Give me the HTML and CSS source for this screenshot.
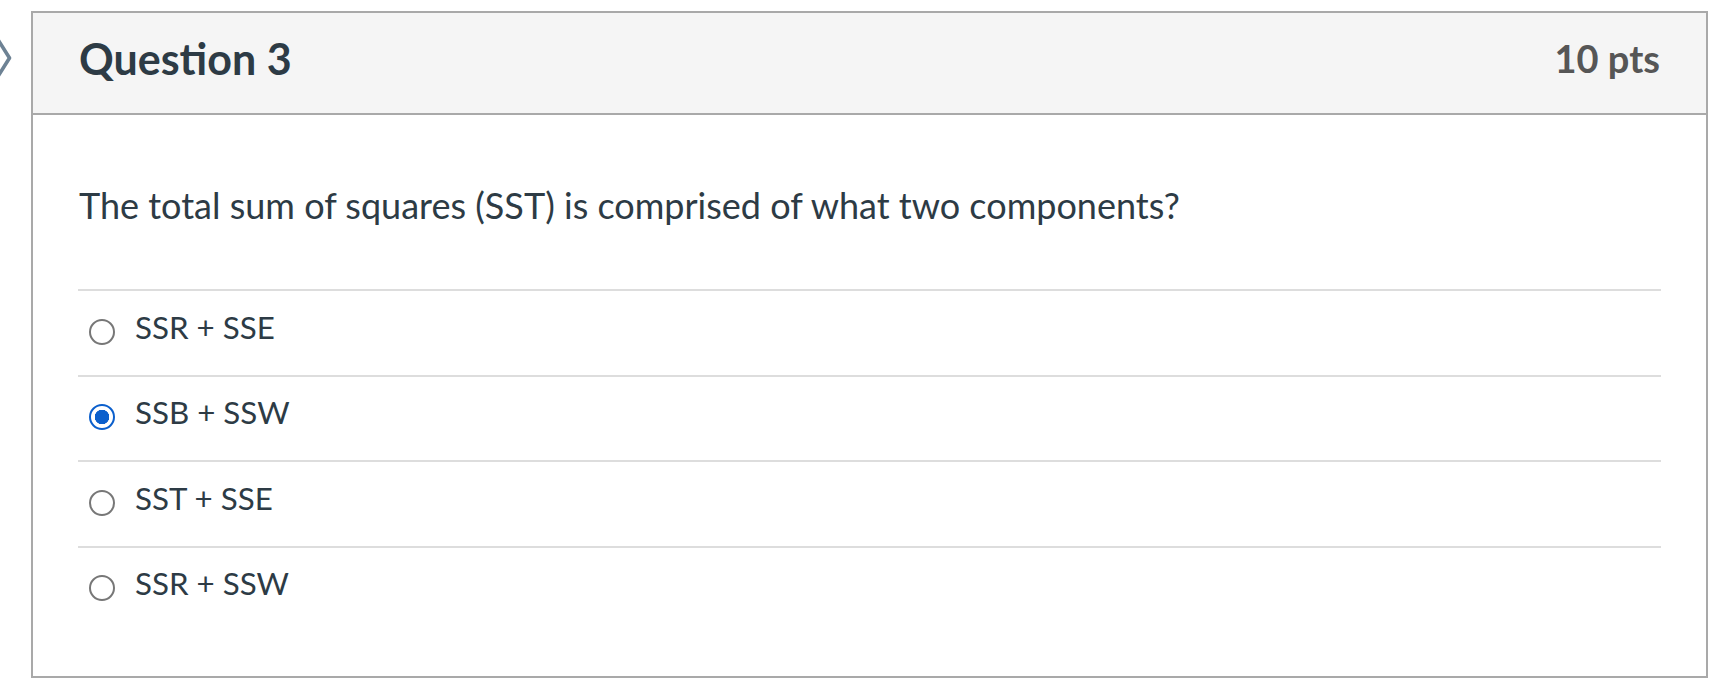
FILE: index.html
```html
<!DOCTYPE html>
<html lang="en">
<head>
<meta charset="utf-8">
<title>Question 3</title>
<link rel="stylesheet" href="styles.css">
</head>
<body>
<div class="page">
  <div class="nav">
    <svg class="chev" width="31" height="100" viewBox="0 0 31 100" aria-hidden="true">
      <polyline points="-3,27 9.5,47 -3,67" fill="none" stroke="#6d8294" stroke-width="3.6" stroke-linejoin="round" stroke-linecap="round"/>
    </svg>
  </div>
  <div class="card">
    <div class="header">
      <h2 class="title">Question 3</h2>
      <div class="pts">10 pts</div>
    </div>
    <div class="body">
      <p class="prompt">The total sum of squares (SST) is comprised of what two components?</p>
      <div class="answers">
        <label class="answer"><span class="radio"></span><span class="atext">SSR + SSE</span></label>
        <label class="answer"><span class="radio checked"></span><span class="atext">SSB + SSW</span></label>
        <label class="answer"><span class="radio"></span><span class="atext">SST + SSE</span></label>
        <label class="answer"><span class="radio"></span><span class="atext">SSR + SSW</span></label>
      </div>
    </div>
  </div>
</div>
</body>
</html>
```
FILE: styles.css
```css
html, body {
  margin: 0;
  padding: 0;
  background: #ffffff;
}
body {
  font-family: Lato, "Open Sans", "Liberation Sans", sans-serif;
  color: #2d3b45;
}
.page {
  display: flex;
  padding-top: 11px;
}
.nav {
  width: 31px;
  flex: none;
  overflow: hidden;
}
.chev {
  display: block;
}
.card {
  box-sizing: border-box;
  width: 1677px;
  height: 667px;
  border: 2px solid #a9a9a9;
  display: flex;
  flex-direction: column;
}
.header {
  box-sizing: border-box;
  height: 102px;
  background: #f5f5f5;
  border-bottom: 2px solid #a9a9a9;
  display: flex;
  align-items: center;
  justify-content: space-between;
  padding: 0 46px 9px 46px;
}
.title {
  margin: 0;
  font-size: 43px;
  line-height: 1.2;
  font-weight: 700;
  color: #2d3b45;
}
.pts {
  font-size: 38px;
  line-height: 1.2;
  font-weight: 700;
  color: #565656;
}
.body {
  padding: 0 45px;
}
.prompt {
  margin: 0;
  padding: 69px 0 62px 1px;
  font-size: 36px;
  line-height: 1.2;
}
.answers {
  display: flex;
  flex-direction: column;
}
.answer {
  display: flex;
  align-items: center;
  height: 85.5px;
  box-sizing: border-box;
  border-top: 2px solid #dddddd;
  padding-left: 11px;
  padding-bottom: 2px;
}
.radio {
  box-sizing: border-box;
  width: 26px;
  height: 26px;
  border-radius: 50%;
  border: 2px solid #777777;
  margin-right: 20px;
  flex: none;
  background: #fff;
}
.radio.checked {
  border: 2.5px solid #0b5fcc;
  background: radial-gradient(circle, #0b5fcc 0 7px, #ffffff 7.5px);
}
.atext {
  font-size: 31.3px;
  line-height: 1.2;
  margin-bottom: 9px;
}
```
